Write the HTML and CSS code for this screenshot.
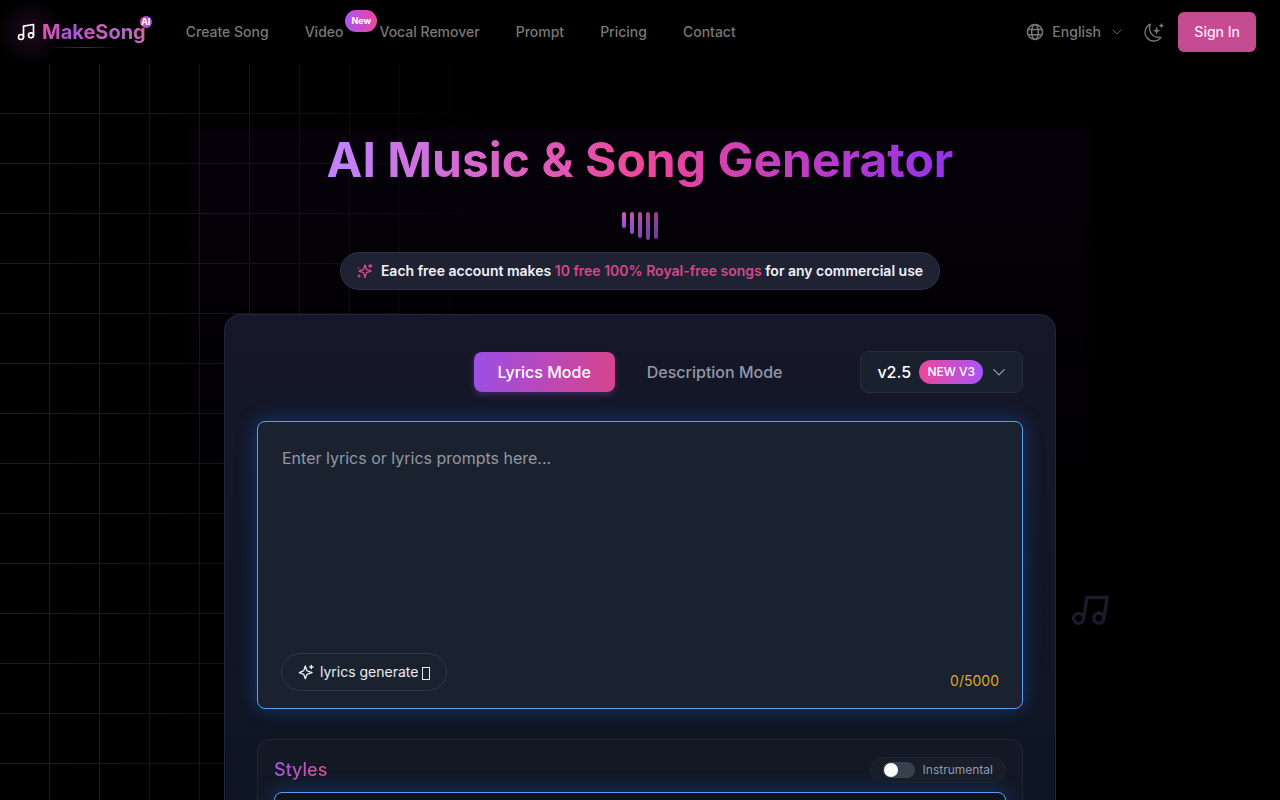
FILE: index.html
```html
<!DOCTYPE html>
<html lang="en">
<head>
    <meta charset="UTF-8">
    <meta name="viewport" content="width=device-width, initial-scale=1.0">
    <title>AI Music &amp; Song Generator</title>
    <link rel="stylesheet" href="styles.css">
</head>
<body>
    <header class="header">
        <a class="logo" href="#">
            <svg class="logo-icon" viewBox="0 0 24 24"><path d="M9 18V5l12-2v13"/><circle cx="6" cy="18" r="3"/><circle cx="18" cy="16" r="3"/></svg>
            <span class="logo-text">MakeSong</span>
            <span class="logo-badge">AI</span>
        </a>
        <nav class="nav">
            <a href="#">Create Song</a>
            <a href="#">Video<span class="nav-badge">New</span></a>
            <a href="#">Vocal Remover</a>
            <a href="#">Prompt</a>
            <a href="#">Pricing</a>
            <a href="#">Contact</a>
        </nav>
        <div class="actions">
            <label class="language">
                <svg class="globe" viewBox="0 0 24 24"><circle cx="12" cy="12" r="10"/><ellipse cx="12" cy="12" rx="4.5" ry="10"/><path d="M3.500 8.500h17M3.500 15.500h17"/></svg>
                <select aria-label="Language"><option>English</option></select>
                <svg class="chevron" viewBox="0 0 24 24"><path d="m4 8 8 8 8-8"/></svg>
            </label>
            <button class="theme" aria-label="Dark mode">
                <svg viewBox="0 0 24 24"><path d="M8.500 2.500C5.500 10 10 18.500 20.500 17.500A10 10 0 1 1 8.500 2.500z"/><path class="solid" d="M15.500 5.500l1.200 3.300 3.300 1.200-3.300 1.200-1.200 3.300-1.200-3.300-3.300-1.200 3.300-1.200zM21 1l1 2 2 1-2 1-1 2-1-2-2-1 2-1z"/></svg>
            </button>
            <button class="sign-in">Sign In</button>
        </div>
    </header>

    <main class="page">
        <div class="grid-lines"></div>
        <div class="glow"></div>
        <svg class="float-note" viewBox="0 0 24 24"><path d="M9 18V5l12-2v13"/><circle cx="6" cy="18" r="3"/><circle cx="18" cy="16" r="3"/></svg>

        <div class="container">
            <h1 class="title">AI Music &amp; Song Generator</h1>
            <div class="bars">
                <span class="bar bar-1"></span>
                <span class="bar bar-2"></span>
                <span class="bar bar-3"></span>
                <span class="bar bar-4"></span>
                <span class="bar bar-5"></span>
            </div>
            <p class="promo">
                <svg class="sparkles" viewBox="0 0 24 24"><path d="M12 3l2.300 6.700L21 12l-6.700 2.300L12 22l-2.300-7.700L3 12l6.700-2.300z"/><path d="M20 2v5M17.500 4.500h5M2.500 7.500h.1M3 18v3M1.500 19.500h3"/></svg>
                <span>Each free account makes <em>10 free 100% Royal-free songs</em> for any commercial use</span>
            </p>

            <section class="panel">
                <div class="toolbar">
                    <div class="tabs">
                        <button class="tab active">Lyrics Mode</button>
                        <button class="tab">Description Mode</button>
                    </div>
                    <label class="version">
                        <select aria-label="Version"><option>v2.5</option></select>
                        <span class="version-badge">NEW V3</span>
                        <svg class="chevron" viewBox="0 0 24 24"><path d="m3 8 9 9 9-9"/></svg>
                    </label>
                </div>

                <div class="lyrics">
                    <textarea aria-label="Lyrics" placeholder="Enter lyrics or lyrics prompts here..."></textarea>
                    <div class="lyrics-footer">
                        <button class="generate">
                            <svg class="sparkles" viewBox="0 0 24 24"><path d="M11 3l2.300 7L21 13l-7.700 2.600L11 22l-2.300-6.400L2 13l6.700-3z"/><path d="M20 2v5M17.500 4.500h5"/></svg>
                            lyrics generate
                            <span class="box-glyph"></span>
                        </button>
                        <span class="counter">0/5000</span>
                    </div>
                </div>

                <div class="styles">
                    <div class="styles-head">
                        <label class="styles-title" for="styles">Styles</label>
                        <label class="instrumental">
                            <input type="checkbox">
                            Instrumental
                        </label>
                    </div>
                    <textarea class="styles-input" id="styles"></textarea>
                </div>
            </section>
        </div>
    </main>
</body>
</html>
```
FILE: styles.css
```css
* {
    box-sizing: border-box;
}
body {
    margin: 0;
    background: #000;
    color: #fff;
    font-family: Inter, "Liberation Sans", sans-serif;
    font-size: 14px;
    line-height: 20px;
    overflow-x: hidden;
}
a {
    color: inherit;
    text-decoration: none;
}
button,
select,
textarea {
    font: inherit;
    color: inherit;
    background: none;
    border: 0;
    padding: 0;
    outline: none;
}
button,
select {
    cursor: pointer;
}
select {
    appearance: none;
}
svg {
    fill: none;
    stroke: currentColor;
    stroke-width: 2;
    stroke-linecap: round;
    stroke-linejoin: round;
    flex-shrink: 0;
}

/* header */
.header {
    position: relative;
    z-index: 2;
    display: flex;
    align-items: center;
    height: 64px;
    padding: 0 24px 0 16px;
    color: #787878;
    font-weight: 500;
}
.logo {
    position: relative;
    display: flex;
    align-items: center;
    gap: 6px;
    margin-right: 40px;
}
.logo::before {
    content: '';
    position: absolute;
    left: -20px;
    top: -20px;
    width: 68px;
    height: 68px;
    background: radial-gradient(circle, rgba(168, 60, 160, .18), transparent 70%);
}
.logo::after {
    content: '';
    position: absolute;
    left: 32px;
    bottom: -2px;
    width: 72px;
    height: 1px;
    background: linear-gradient(90deg, transparent, #3c3838, transparent);
}
.logo-icon {
    position: relative;
    width: 20px;
    height: 20px;
    color: #fff;
}
.logo-text {
    position: relative;
    font-size: 20px;
    line-height: 28px;
    font-weight: 700;
    background: linear-gradient(90deg, #e355a8, #a855e0 30%, #d55cb4 50%, #a868c8 72%, #d069a5);
    background-clip: text;
    -webkit-background-clip: text;
    color: transparent;
}
.logo-badge {
    position: absolute;
    right: -6px;
    top: -2px;
    width: 12px;
    height: 12px;
    border-radius: 50%;
    background: linear-gradient(90deg, #e0479c, #a04de0);
    color: #fff;
    font-size: 9px;
    line-height: 12px;
    font-weight: 700;
    text-align: center;
}
.nav {
    display: flex;
    gap: 36px;
}
.nav a {
    position: relative;
    white-space: nowrap;
}
.nav-badge {
    position: absolute;
    left: 100%;
    top: -12px;
    margin-left: 2px;
    padding: 3px 6px;
    border-radius: 11px;
    background: linear-gradient(90deg, #a855f7, #ec4899);
    color: #fff;
    font-size: 9px;
    line-height: 16px;
    font-weight: 700;
}
.actions {
    display: flex;
    align-items: center;
    margin-left: auto;
}
.language {
    display: flex;
    align-items: center;
    gap: 8px;
}
.globe {
    width: 18px;
    height: 18px;
}
.chevron {
    width: 14px;
    height: 14px;
    pointer-events: none;
}
.language .chevron {
    width: 12px;
    height: 12px;
    margin-left: 2px;
    opacity: .8;
}
.theme {
    display: flex;
    margin: 0 14px 0 20px;
}
.theme svg {
    width: 21px;
    height: 21px;
    stroke-width: 1.5;
}
.theme .solid {
    fill: currentColor;
    stroke: none;
}
.sign-in {
    height: 40px;
    padding: 0 16px;
    border-radius: 6px;
    background: #c54b93;
    color: #fbe9f5;
}

/* backdrop */
.page {
    position: relative;
    padding: 68px 24px 0;
    overflow: hidden;
}
.grid-lines {
    position: absolute;
    inset: 0;
    background-image:
        linear-gradient(90deg, transparent 49px, #1e1e1e 49px),
        linear-gradient(transparent 49px, #1e1e1e 49px);
    background-size: 50px 50px;
    mask-image: linear-gradient(90deg, #000, rgba(0, 0, 0, .5) 26%, transparent 38%);
}
.glow {
    position: absolute;
    top: 64px;
    left: 15%;
    right: 15%;
    height: 400px;
    background: linear-gradient(rgba(100, 30, 170, .06), transparent);
    filter: blur(4px);
}
.float-note {
    position: absolute;
    top: 526px;
    left: calc(50% + 430px);
    width: 40px;
    height: 40px;
    color: #1e1a2c;
    transform: rotate(9deg);
}

/* hero */
.container {
    position: relative;
    display: flex;
    flex-direction: column;
    align-items: center;
    max-width: 832px;
    margin: 0 auto;
}
.title {
    margin: 0;
    font-size: 48px;
    line-height: 56px;
    font-weight: 700;
    background: linear-gradient(90deg, #c084fc, #ec4899 50%, #9333ea);
    background-clip: text;
    -webkit-background-clip: text;
    color: transparent;
}
.bars {
    display: flex;
    gap: 4px;
    height: 28px;
    margin: 24px 0 12px;
}
.bar {
    width: 4px;
    height: 16px;
    border-radius: 2px;
    background: linear-gradient(#cf5a9c, #b058d0 40%, #9250c8);
}
.bar-2 {
    height: 22px;
    opacity: .95;
}
.bar-3 {
    height: 26px;
    opacity: .88;
}
.bar-4 {
    height: 28px;
    opacity: .8;
}
.bar-5 {
    height: 27px;
    opacity: .75;
}
.promo {
    display: flex;
    align-items: center;
    gap: 8px;
    margin: 0 0 24px;
    padding: 8px 16px;
    border: 1px solid #332e4d;
    border-radius: 19px;
    background: #1f2233;
    color: #f1f1f8;
    font-weight: 600;
}
.promo em {
    font-style: normal;
    color: #d6468c;
}
.sparkles {
    width: 16px;
    height: 16px;
}
.promo .sparkles {
    color: #d6468c;
}

/* generator */
.panel {
    width: 100%;
    padding: 36px 32px 32px;
    border: 1px solid #22263a;
    border-radius: 16px;
    background: linear-gradient(#161728, #111726 35%, #0d1520);
}
.toolbar {
    display: grid;
    grid-template-columns: 1fr auto 1fr;
    align-items: center;
    margin-bottom: 28px;
}
.tabs {
    grid-column: 2;
    display: flex;
    gap: 8px;
}
.tab {
    height: 40px;
    padding: 0 24px;
    border-radius: 8px;
    color: #9297a5;
    font-size: 16px;
    font-weight: 500;
}
.tab.active {
    background: linear-gradient(100deg, #9b4fe8, #d8438b);
    color: #fff;
    box-shadow: 0 3px 6px rgba(155, 79, 232, .3);
}
.version {
    justify-self: end;
    display: flex;
    align-items: center;
    gap: 8px;
    height: 42px;
    padding: 0 16px;
    border: 1px solid #262e3c;
    border-radius: 8px;
    background: #1a212e;
    font-size: 16px;
    font-weight: 500;
}
.version-badge {
    padding: 4px 8px;
    border-radius: 12px;
    background: linear-gradient(90deg, #ec4899, #a855f7);
    font-size: 12px;
    line-height: 16px;
}
.version .chevron {
    margin-left: 1px;
    color: #9ca3af;
}
.lyrics {
    padding: 24px 23px 17px;
    border: 1px solid #609cf0;
    border-radius: 8px;
    background: #1b222f;
    box-shadow: 0 0 20px rgba(37, 99, 235, .4);
}
.lyrics textarea {
    display: block;
    width: 100%;
    height: 207px;
    padding: 0 1px;
    font-size: 16px;
    line-height: 24px;
    resize: none;
}
.lyrics textarea::placeholder {
    color: #9298a4;
}
.lyrics-footer {
    display: flex;
    align-items: flex-end;
    justify-content: space-between;
}
.generate {
    display: flex;
    align-items: center;
    gap: 6px;
    height: 38px;
    padding: 0 16px;
    border: 1px solid #303846;
    border-radius: 19px;
    color: #e8ecf4;
}
.box-glyph {
    width: 8px;
    height: 13px;
    margin: 3px 0 0 -2px;
    border: 1px solid currentColor;
}
.counter {
    color: #dfa926;
}
.styles {
    margin-top: 30px;
    padding: 16px;
    border: 1px solid #1f2735;
    border-radius: 12px;
    background: #121824;
}
.styles-head {
    display: flex;
    align-items: center;
    justify-content: space-between;
    margin-bottom: 8px;
}
.styles-title {
    font-size: 18px;
    line-height: 28px;
    font-weight: 500;
    background: linear-gradient(90deg, #a855e8, #d9508f);
    background-clip: text;
    -webkit-background-clip: text;
    color: transparent;
}
.instrumental {
    display: flex;
    align-items: center;
    gap: 8px;
    height: 26px;
    padding: 0 12px;
    border: 1px solid #1c2431;
    border-radius: 13px;
    background: #171e2a;
    color: #9299a6;
    font-size: 12px;
}
.instrumental input {
    appearance: none;
    display: flex;
    align-items: center;
    width: 32px;
    height: 16px;
    margin: 0;
    padding: 0 1px;
    border-radius: 8px;
    background: #37404d;
}
.instrumental input::before {
    content: '';
    width: 14px;
    height: 14px;
    border-radius: 50%;
    background: #fff;
}
.instrumental input:checked {
    justify-content: flex-end;
    background: #a855f7;
}
.styles-input {
    display: block;
    width: 100%;
    height: 120px;
    padding: 12px 16px;
    border: 1px solid #609cf0;
    border-radius: 8px;
    background: #0e1520;
    box-shadow: 0 0 20px rgba(37, 99, 235, .4);
    resize: none;
}
```
